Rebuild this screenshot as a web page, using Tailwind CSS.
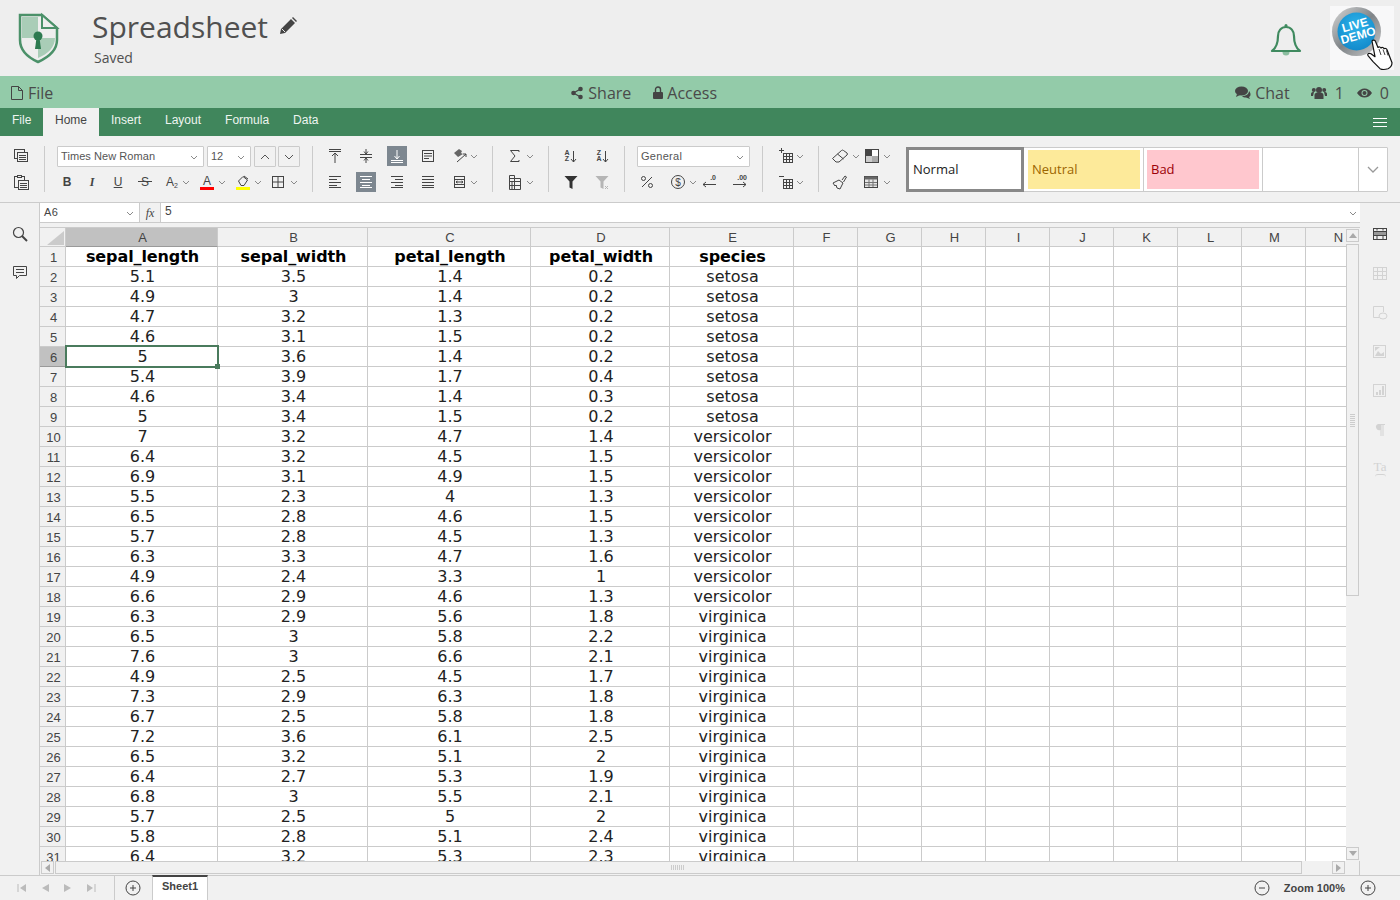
<!DOCTYPE html>
<html lang="en">
<head>
  <meta charset="UTF-8">
  <title>Spreadsheet</title>
  <script src="https://cdn.jsdelivr.net/npm/@tailwindcss/browser@4"></script>
</head>
<body class="h-screen overflow-hidden flex flex-col bg-[#f1f1f1] font-['Open_Sans',sans-serif] text-[#505050]">

  <!-- icon sprites -->
  <svg class="hidden" xmlns="http://www.w3.org/2000/svg">
    <symbol id="chev" viewBox="0 0 8 20"><path d="M1 9l3 3 3-3" fill="none" stroke="#8a8a8a"/></symbol>
    <symbol id="copy" viewBox="0 0 20 20"><g fill="#f1f1f1" stroke="#444"><rect x="2.5" y="3.5" width="10" height="9"/><rect x="5.5" y="6.5" width="10" height="9"/><path d="M7 9.5h7M7 11.5h7M7 13.5h7"/></g></symbol>
    <symbol id="paste" viewBox="0 0 20 20"><g fill="#f1f1f1" stroke="#444"><rect x="2.5" y="4.5" width="10" height="11"/><rect x="5.5" y="3.5" width="4" height="2"/><rect x="6.5" y="8.5" width="10" height="9"/><path d="M8 11.5h7M8 13.5h7M8 15.5h7"/></g></symbol>
    <symbol id="atop" viewBox="0 0 20 20"><path d="M4 3.500h12M4 5.500h12M10 17V7M7 10l3-3 3 3" fill="none" stroke="#444"/></symbol>
    <symbol id="amid" viewBox="0 0 20 20"><path d="M4 8.500h12M4 11.500h12M10 3v5M8 5.500l2 2.500 2-2.500M10 17v-5M8 14.500l2-2.500 2 2.500" fill="none" stroke="#444"/></symbol>
    <symbol id="abot" viewBox="0 0 20 20"><path d="M4 14.500h12M4 16.500h12M10 4v9M7.500 10l2.500 3 2.500-3" fill="none" stroke="#fff"/></symbol>
    <symbol id="wrap" viewBox="0 0 20 20"><rect x="4.500" y="4.500" width="11" height="11" fill="none" stroke="#444"/><path d="M6 7.500h8M6 10h8M6 12.500h5" stroke="#444"/></symbol>
    <symbol id="orient" viewBox="0 0 20 20"><path d="M4 7l5-4 3 2-1 2 2 1-5 3z" fill="#666"/><path d="M7 16l9-8M13 8h3v3" fill="none" stroke="#444"/></symbol>
    <symbol id="left" viewBox="0 0 20 20"><path d="M4 4.500h12M4 7.500h8M4 10.500h12M4 13.500h8M4 15.500h12" stroke="#444"/></symbol>
    <symbol id="center" viewBox="0 0 20 20"><path d="M4 4.500h12M6 7.500h8M4 10.500h12M6 13.500h8M4 15.500h12" stroke="#fff"/></symbol>
    <symbol id="right" viewBox="0 0 20 20"><path d="M4 4.500h12M8 7.500h8M4 10.500h12M8 13.500h8M4 15.500h12" stroke="#444"/></symbol>
    <symbol id="just" viewBox="0 0 20 20"><path d="M4 4.500h12M4 7.500h12M4 10.500h12M4 13.500h12M4 15.500h12" stroke="#444"/></symbol>
    <symbol id="merge" viewBox="0 0 20 20"><rect x="4.500" y="4.500" width="10" height="11" fill="none" stroke="#444"/><path d="M4.500 7.500h10M4.500 12.500h10M6 10h7M6 10l1.500-1M6 10l1.500 1M13 10l-1.500-1M13 10l-1.500 1" fill="none" stroke="#444"/></symbol>
    <symbol id="sum" viewBox="0 0 20 20"><path d="M14 6V4.500H5.500L10 10l-4.500 5.500H14V14" fill="none" stroke="#444"/></symbol>
    <symbol id="table" viewBox="0 0 20 20"><path d="M4.500 3.500h5v3h6v11h-11zM4.500 6.500h5M4.500 9.500h11M4.500 13.500h11M9.500 6.500v11M7 9.500v8" fill="none" stroke="#444"/></symbol>
    <symbol id="down" viewBox="0 0 20 20"><path d="M11 13l2.500 3 2.500-3M13.500 5v11" fill="none" stroke="#444"/></symbol>
    <symbol id="filter" viewBox="0 0 20 20"><path d="M3.500 4h13l-5 5.500V17l-3-1.500V9.500z" fill="#333"/></symbol>
    <symbol id="nofilter" viewBox="0 0 20 20"><path d="M3.500 4h13l-5 5.500V17l-3-1.500V9.500z" fill="#b5b5b5"/><path d="M13 14l3 3M16 14l-3 3" stroke="#b5b5b5"/></symbol>
    <symbol id="pct" viewBox="0 0 20 20"><path d="M15 5L5 15" stroke="#444"/><circle cx="6.500" cy="6.500" r="2" fill="none" stroke="#444"/><circle cx="13.500" cy="13.500" r="2" fill="none" stroke="#444"/></symbol>
    <symbol id="ins" viewBox="0 0 20 20"><path d="M3 4.500h5M5.500 2v5" stroke="#444"/><g fill="none" stroke="#444"><rect x="7.500" y="7.500" width="9" height="9"/><path d="M10.500 7.500v9M13.500 7.500v9M7.500 10.500h9M7.500 13.500h9"/></g></symbol>
    <symbol id="del" viewBox="0 0 20 20"><path d="M3 4.500h5" stroke="#444"/><g fill="none" stroke="#444"><rect x="7.500" y="7.500" width="9" height="9"/><path d="M10.500 7.500v9M13.500 7.500v9M7.500 10.500h9M7.500 13.500h9"/></g></symbol>
    <symbol id="eraser" viewBox="0 0 20 20"><path d="M2.500 12.500l9-8a1.500 1.500 0 0 1 2 0l3.500 2.500a1.500 1.500 0 0 1 0 2l-8 7H6z" fill="none" stroke="#444"/><path d="M7.500 8l6 5" stroke="#444"/></symbol>
    <symbol id="shade" viewBox="0 0 20 20"><rect x="3.500" y="3.500" width="13" height="13" fill="#fff" stroke="#444"/><rect x="4" y="4" width="6" height="6" fill="#444"/><rect x="10" y="10" width="6" height="6" fill="#aaa"/><rect x="4" y="10" width="6" height="6" fill="#ccc"/></symbol>
    <symbol id="brush" viewBox="0 0 20 20"><path d="M3 11l6-3 4 3-3 6-3-1-1-3-1 1zM12 8l3-4 1.500 1-3 5" fill="none" stroke="#444"/></symbol>
    <symbol id="tstyle" viewBox="0 0 20 20"><rect x="3.500" y="4.500" width="13" height="11" fill="#e6e6e6" stroke="#444"/><rect x="3.500" y="4.500" width="13" height="3" fill="#666"/><path d="M3.500 10.500h13M3.500 13h13M8 7.500v8M12 7.500v8" stroke="#444" opacity=".7"/></symbol>
    <symbol id="g-table" viewBox="0 0 20 20"><rect x="3.500" y="3.500" width="13" height="12" fill="none" stroke="#d3d3d3"/><path d="M3.500 7.500h13M3.500 11.500h13M7.500 3.500v12M12.500 3.500v12" stroke="#d3d3d3"/></symbol>
    <symbol id="g-shape" viewBox="0 0 20 20"><path d="M9 14.500H3.500v-11h10V9" fill="none" stroke="#d3d3d3"/><ellipse cx="13" cy="13" rx="4" ry="3" fill="none" stroke="#d3d3d3"/></symbol>
    <symbol id="g-img" viewBox="0 0 20 20"><rect x="3.500" y="3.500" width="12" height="12" fill="none" stroke="#d3d3d3"/><path d="M5 14l3-5 3 3 3-2v4z" fill="#d3d3d3"/><path d="M5 5h5l-5 4z" fill="#d3d3d3"/></symbol>
    <symbol id="g-chart" viewBox="0 0 20 20"><rect x="3.500" y="3.500" width="12" height="12" fill="none" stroke="#d3d3d3"/><path d="M6 11h2v3H6zM9 9h2v5H9zM12 5h2v9h-2z" fill="#d3d3d3"/></symbol>
    <symbol id="g-para" viewBox="0 0 20 20"><path d="M8 4h7v1h-1.500v11h-1V5h-1v11h-1v-6a3 3 0 0 1-2.500-6z" fill="#d3d3d3"/></symbol>
  </svg>

  <!-- title bar -->
  <header class="h-[76px] shrink-0 flex bg-[#eeeeee]">
    <svg class="w-[44px] h-[52px] ml-[17px] mt-[12px]" viewBox="0 0 44 52">
      <path d="M3 3h22l15 13v12c0 10-8 17-19 22C10 45 3 38 3 28z" fill="#eeeeee" stroke="#4b9169" stroke-width="2.500"/>
      <path d="M5 5h16v21H5zM21 26h17c0 9-7 16-17 20z" fill="#a9cdb7"/>
      <path d="M25 3v13h15z" fill="#eeeeee" stroke="#4b9169" stroke-width="2"/>
      <circle cx="21" cy="24" r="4.500" fill="#2d7a50"/>
      <path d="M19.500 26h3l1.500 11h-6z" fill="#2d7a50"/>
    </svg>
    <div class="ml-[31px] mt-[8px]">
      <div class="flex items-center h-[38px]">
        <span class="text-[30px] leading-[38px]">Spreadsheet</span>
        <svg class="w-[18px] h-[18px] ml-[11px] mb-[2px]" viewBox="0 0 18 18"><path d="M1 17l1-5L12 2l4 4L6 16zM13 1l1-1 4 4-1 1z" fill="#444"/><path d="M3 12l3 3" stroke="#eee"/></svg>
      </div>
      <p class="text-sm leading-[19px] ml-[2px] mt-[2px]">Saved</p>
    </div>
    <svg class="w-[32px] h-[36px] ml-auto mt-[23px] mr-[28px]" viewBox="0 0 32 36">
      <path d="M16 4c-5 0-8 4-8 9 0 8-2 12-6 15h28c-4-3-6-7-6-15 0-5-3-9-8-9z" fill="none" stroke="#3f8a5f" stroke-width="2.200" stroke-linejoin="round"/>
      <circle cx="16" cy="2.500" r="1.500" fill="#3f8a5f"/>
      <path d="M12.500 29a3.500 3.500 0 0 0 7 0z" fill="#8bbd9f"/>
    </svg>
    <!-- live demo badge -->
    <div class="relative w-[64px] h-[64px] mt-[6px] mr-[6px] bg-[#f8f8f9]">
      <svg class="absolute left-0 top-0 overflow-visible" width="64" height="64" viewBox="0 0 64 64">
        <defs>
          <linearGradient id="ring" x1="0" y1="0" x2="1" y2="1"><stop offset="0" stop-color="#d9d9d9"/><stop offset=".5" stop-color="#7f8488"/><stop offset="1" stop-color="#cfcfcf"/></linearGradient>
          <radialGradient id="ball" cx=".5" cy=".35" r=".7"><stop offset="0" stop-color="#2db3ea"/><stop offset="1" stop-color="#1187c9"/></radialGradient>
        </defs>
        <circle cx="26.500" cy="25.500" r="24.500" fill="url(#ring)"/>
        <circle cx="26.500" cy="25.500" r="19" fill="url(#ball)"/>
        <g fill="#fff" font-family="Liberation Sans" font-weight="700" text-anchor="middle" font-size="12">
          <text x="25" y="23" transform="rotate(-16 25 19)">LIVE</text>
          <text x="28" y="33.500" transform="rotate(-16 28 29)">DEMO</text>
        </g>
        <path d="M42 35c1-1.500 3-1 3.500.5l2.500 6c1-1 2.500-.5 3 .5 1-1 2.500-.5 3 .7 1-.7 2.500 0 3 1l5 13c0 3-2 5-4 6-3 1-6 1-8 0l-7-7-5-6c-1-2 1-3 3-2l4 3z" fill="#fff" stroke="#111" stroke-width="1.200" stroke-linejoin="round"/>
        <path d="M49 43l2 6M53 43.500l2 5.500M56.500 44.500l1.500 5" stroke="#111" stroke-width=".8"/>
      </svg>
    </div>
  </header>

  <!-- document menu -->
  <nav class="h-8 shrink-0 pt-[2px] flex items-center bg-[#93cba9] text-base text-[#4a4a4a]">
    <svg class="w-3 h-[14px] ml-[11px] mr-[5px]" viewBox="0 0 12 14"><path d="M.5.500h7l4 4v9H.5zM7.500.500v4h4" fill="none" stroke="#444"/></svg>
    <span>File</span>
    <svg class="w-3 h-[14px] ml-[518px] mr-[5px]" viewBox="0 0 12 14"><path d="M9.500 3L2.500 7l7 4" fill="none" stroke="#444" stroke-width="1.200"/><circle cx="9.500" cy="3" r="2.300" fill="#444"/><circle cx="2.500" cy="7" r="2.300" fill="#444"/><circle cx="9.500" cy="11" r="2.300" fill="#444"/></svg>
    <span>Share</span>
    <svg class="w-[10px] h-[14px] ml-[22px] mr-[4px]" viewBox="0 0 10 14"><path d="M2.500 6V3.500a2.500 2.500 0 0 1 5 0V6" fill="none" stroke="#444" stroke-width="1.400"/><rect x="0" y="6" width="10" height="7" rx="1" fill="#444"/></svg>
    <span>Access</span>
    <svg class="w-4 h-[14px] ml-auto mr-1" viewBox="0 0 16 14"><ellipse cx="6.500" cy="5" rx="6.500" ry="4.500" fill="#444"/><path d="M2 8L1 11l4-2z" fill="#444"/><path d="M14 5c2 2 2 5 0 6l1 2-4-1.500c-2 0-3-.5-4-1.500 4 0 7-2 7-5z" fill="#444"/></svg>
    <span>Chat</span>
    <svg class="w-4 h-[14px] ml-[21px] mr-[8px]" viewBox="0 0 16 14"><circle cx="8" cy="4" r="3" fill="#444"/><circle cx="2.800" cy="4" r="2" fill="#444"/><circle cx="13.200" cy="4" r="2" fill="#444"/><path d="M3.500 13V9c0-2 2-2.500 4.500-2.500s4.500.5 4.500 2.500v4zM0 10V8c0-1.500 1-2 3-2l-1 4zM16 10V8c0-1.500-1-2-3-2l1 4z" fill="#444"/></svg>
    <span>1</span>
    <svg class="w-[15px] h-[14px] ml-[13px] mr-[8px]" viewBox="0 0 15 14"><path d="M0 7c2-3 4.500-4.500 7.500-4.500S13 4 15 7c-2 3-4.500 4.500-7.500 4.500S2 10 0 7z" fill="#444"/><circle cx="7.500" cy="7" r="3" fill="#93cba9"/><circle cx="7.500" cy="7" r="2" fill="#444"/></svg>
    <span class="mr-[11px]">0</span>
  </nav>

  <!-- ribbon tabs -->
  <nav class="h-7 shrink-0 flex bg-[#40865c] text-xs leading-[24px] text-[#eef5f0] font-['Liberation_Sans',sans-serif]">
    <span class="ml-[12px] w-[19px]">File</span>
    <span class="ml-[12px] w-[56px] text-center bg-[#f1f1f1] text-[#444]">Home</span>
    <span class="ml-[12px]">Insert</span>
    <span class="ml-[24px]">Layout</span>
    <span class="ml-[24px]">Formula</span>
    <span class="ml-[24px]">Data</span>
    <span class="ml-auto mr-[13px] mt-[10px] w-[14px] h-[9px] border-y border-white relative after:absolute after:left-0 after:right-0 after:top-[3px] after:h-px after:bg-white"></span>
  </nav>

  <!-- toolbar -->
  <section class="h-[67px] shrink-0 pt-[10px] flex items-start border-b border-[#cbcbcb] font-['Liberation_Sans',sans-serif] text-[#444]">
    <div class="w-[44px] h-[46px] flex flex-col gap-[6px]">
      <svg class="w-5 h-5 ml-[12px]"><use href="#copy"/></svg>
      <svg class="w-5 h-5 ml-[12px]"><use href="#paste"/></svg>
    </div>

    <div class="w-[268px] h-[46px] border-l border-[#cbcbcb] flex flex-col gap-[6px]">
      <div class="h-5 flex">
        <div class="w-[147px] h-[21px] ml-[12px] bg-white border border-[#cbcbcb] rounded-[1px] flex items-center pl-[3px] text-[11px] tracking-[0.07px] text-[#555]">Times New Roman<svg class="w-2 h-5 ml-auto mr-[5px]"><use href="#chev"/></svg></div>
        <div class="w-[44px] h-[21px] ml-[3px] bg-white border border-[#cbcbcb] rounded-[1px] flex items-center pl-[3px] text-[11px] text-[#555]">12<svg class="w-2 h-5 ml-auto mr-[5px]"><use href="#chev"/></svg></div>
        <div class="w-[22px] h-[21px] ml-[3px] border border-[#cbcbcb] rounded-[1px] flex items-center justify-center"><svg width="10" height="6"><path d="M1 5l4-4 4 4" fill="none" stroke="#555"/></svg></div>
        <div class="w-[22px] h-[21px] ml-[2px] border border-[#cbcbcb] rounded-[1px] flex items-center justify-center"><svg width="10" height="6"><path d="M1 1l4 4 4-4" fill="none" stroke="#555"/></svg></div>
      </div>
      <div class="h-5 flex items-center text-[12px]">
        <span class="w-5 ml-[12px] text-center font-bold">B</span>
        <span class="w-5 ml-[5px] text-center italic font-bold font-['Liberation_Serif',serif]">I</span>
        <span class="w-5 ml-[6px] text-center underline">U</span>
        <span class="relative w-5 ml-[7px] text-center">S<span class="absolute left-[3px] right-[3px] top-[8px] h-px bg-[#444]"></span></span>
        <span class="w-5 ml-[7px] text-center">A<sub class="text-[7px]">2</sub></span>
        <svg class="w-2 h-5"><use href="#chev"/></svg>
        <span class="w-5 ml-[7px] flex flex-col items-center leading-[12px]">A<span class="w-[14px] h-[3px] bg-[#ff0000]"></span></span>
        <svg class="w-2 h-5 ml-px"><use href="#chev"/></svg>
        <span class="w-5 ml-[7px] flex flex-col items-center"><svg width="14" height="12" viewBox="0 0 14 12"><path d="M2.500 6L7 1.500l4.500 3.500L8 10.500H5zM8 1l4 3" fill="none" stroke="#444"/></svg><span class="w-[14px] h-[3px] bg-[#ffff00]"></span></span>
        <svg class="w-2 h-5 ml-px"><use href="#chev"/></svg>
        <svg class="w-5 h-5 ml-[7px]" viewBox="0 0 20 20"><rect x="3.500" y="4.500" width="11" height="11" fill="none" stroke="#444"/><path d="M9 4.500v11M3.500 10h11" stroke="#444"/></svg>
        <svg class="w-2 h-5 ml-px"><use href="#chev"/></svg>
      </div>
    </div>

    <div class="w-[180px] h-[46px] border-l border-[#cbcbcb] flex flex-col gap-[6px]">
      <div class="h-5 flex">
        <svg class="w-5 h-5 ml-[12px]"><use href="#atop"/></svg>
        <svg class="w-5 h-5 ml-[11px]"><use href="#amid"/></svg>
        <svg class="w-5 h-5 ml-[11px] bg-[#7d8790]"><use href="#abot"/></svg>
        <svg class="w-5 h-5 ml-[11px]"><use href="#wrap"/></svg>
        <svg class="w-5 h-5 ml-[12px]"><use href="#orient"/></svg>
        <svg class="w-2 h-5"><use href="#chev"/></svg>
      </div>
      <div class="h-5 flex">
        <svg class="w-5 h-5 ml-[12px]"><use href="#left"/></svg>
        <svg class="w-5 h-5 ml-[11px] bg-[#7d8790]"><use href="#center"/></svg>
        <svg class="w-5 h-5 ml-[11px]"><use href="#right"/></svg>
        <svg class="w-5 h-5 ml-[11px]"><use href="#just"/></svg>
        <svg class="w-5 h-5 ml-[12px]"><use href="#merge"/></svg>
        <svg class="w-2 h-5"><use href="#chev"/></svg>
      </div>
    </div>

    <div class="w-[56px] h-[46px] border-l border-[#cbcbcb] flex flex-col gap-[6px]">
      <div class="h-5 flex"><svg class="w-5 h-5 ml-[12px]"><use href="#sum"/></svg><svg class="w-2 h-5 ml-px"><use href="#chev"/></svg></div>
      <div class="h-5 flex"><svg class="w-5 h-5 ml-[12px]"><use href="#table"/></svg><svg class="w-2 h-5 ml-px"><use href="#chev"/></svg></div>
    </div>

    <div class="w-[76px] h-[46px] border-l border-[#cbcbcb] flex flex-col gap-[6px]">
      <div class="h-5 flex">
        <span class="relative w-5 h-5 ml-[11px]"><span class="absolute left-[4px] top-[4px] text-[7px] leading-[6px] font-bold w-[6px] text-center">A<br>Z</span><svg class="w-5 h-5"><use href="#down"/></svg></span>
        <span class="relative w-5 h-5 ml-[12px]"><span class="absolute left-[4px] top-[4px] text-[7px] leading-[6px] font-bold w-[6px] text-center">Z<br>A</span><svg class="w-5 h-5"><use href="#down"/></svg></span>
      </div>
      <div class="h-5 flex">
        <svg class="w-5 h-5 ml-[12px]"><use href="#filter"/></svg>
        <svg class="w-5 h-5 ml-[11px]"><use href="#nofilter"/></svg>
      </div>
    </div>

    <div class="w-[138px] h-[46px] border-l border-[#cbcbcb] flex flex-col gap-[6px]">
      <div class="h-5 flex">
        <div class="w-[113px] h-[21px] ml-[12px] bg-white border border-[#cbcbcb] rounded-[1px] flex items-center pl-[3px] text-[11px] tracking-[0.3px] text-[#555]">General<svg class="w-2 h-5 ml-auto mr-[5px]"><use href="#chev"/></svg></div>
      </div>
      <div class="h-5 flex">
        <svg class="w-5 h-5 ml-[12px]"><use href="#pct"/></svg>
        <svg class="w-5 h-5 ml-[11px]" viewBox="0 0 20 20"><circle cx="10" cy="10" r="6.500" fill="none" stroke="#444"/><text x="10" y="13.500" font-size="10" text-anchor="middle" fill="#444">$</text></svg>
        <svg class="w-2 h-5 ml-px"><use href="#chev"/></svg>
        <span class="relative w-5 h-5 ml-[2px] text-[7px] font-bold"><span class="absolute right-[3px] top-[2px] leading-[8px]">.0</span><svg class="w-5 h-5" viewBox="0 0 20 20"><path d="M17 12.500H4M7 10l-3 2.500L7 15" fill="none" stroke="#444"/></svg></span>
        <span class="relative w-5 h-5 ml-[11px] text-[7px] font-bold"><span class="absolute right-[3px] top-[2px] leading-[8px]">.00</span><svg class="w-5 h-5" viewBox="0 0 20 20"><path d="M3 12.500h13M13 10l3 2.500-3 2.500" fill="none" stroke="#444"/></svg></span>
      </div>
    </div>

    <div class="w-[56px] h-[46px] border-l border-[#cbcbcb] flex flex-col gap-[6px]">
      <div class="h-5 flex"><svg class="w-5 h-5 ml-[13px]"><use href="#ins"/></svg><svg class="w-2 h-5"><use href="#chev"/></svg></div>
      <div class="h-5 flex"><svg class="w-5 h-5 ml-[13px]"><use href="#del"/></svg><svg class="w-2 h-5"><use href="#chev"/></svg></div>
    </div>

    <div class="w-[88px] h-[46px] border-l border-[#cbcbcb] flex flex-col gap-[6px]">
      <div class="h-5 flex"><svg class="w-5 h-5 ml-[11px]"><use href="#eraser"/></svg><svg class="w-2 h-5 ml-[2px]"><use href="#chev"/></svg><svg class="w-5 h-5 ml-[2px]"><use href="#shade"/></svg><svg class="w-2 h-5 ml-px"><use href="#chev"/></svg></div>
      <div class="h-5 flex"><svg class="w-5 h-5 ml-[11px]"><use href="#brush"/></svg><svg class="w-5 h-5 ml-[11px]"><use href="#tstyle"/></svg><svg class="w-2 h-5 ml-[2px]"><use href="#chev"/></svg></div>
    </div>

    <div class="w-[482px] h-[45px] mt-px bg-white border border-[#cbcbcb] rounded-[1px] flex text-[13px] font-['Open_Sans',sans-serif]">
      <div class="w-[118px] -ml-px -my-px border-[3px] border-[#888888] flex items-center pl-[4px] text-[#222]">Normal</div>
      <div class="w-[120px] border-r border-[#cbcbcb] pl-[4px] py-[2px]"><div class="w-[112px] h-full bg-[#fdea9a] text-[#9c6500] flex items-center pl-[4px]">Neutral</div></div>
      <div class="w-[119px] border-r border-[#cbcbcb] pl-[3px] py-[2px]"><div class="w-[112px] h-full bg-[#ffc7ce] text-[#9c0006] flex items-center pl-[4px]">Bad</div></div>
      <div class="w-[96px] border-r border-[#cbcbcb]"></div>
      <div class="flex-1 flex items-center justify-center"><svg width="12" height="8"><path d="M1 1l5 5 5-5" fill="none" stroke="#999" stroke-width="1.300"/></svg></div>
    </div>
  </section>

  <!-- workspace -->
  <main class="flex-1 min-h-0 flex font-['Liberation_Sans',sans-serif]">
    <aside class="w-10 shrink-0 border-r border-[#cbcbcb] flex flex-col items-center pt-[22px] gap-[20px]">
      <svg class="w-[18px] h-[18px]" viewBox="0 0 18 18"><circle cx="7.500" cy="7.500" r="5" fill="none" stroke="#444" stroke-width="1.200"/><path d="M11 11l5 5" stroke="#444" stroke-width="2"/></svg>
      <svg class="w-[18px] h-[18px]" viewBox="0 0 18 18"><path d="M2.500 3.500h13v9h-7l-3 3v-3h-3z" fill="none" stroke="#444"/><path d="M5 6.500h8M5 9.500h8" stroke="#444"/></svg>
    </aside>

    <div class="flex-1 min-w-0 flex flex-col">
      <!-- formula bar -->
      <div class="h-5 shrink-0 flex bg-white border-b border-[#cbcbcb] text-[11px] text-[#444]">
        <div class="w-[100px] border-r border-[#cbcbcb] flex items-center pl-[4px] tracking-[0.3px]">A6<svg class="w-2 h-5 ml-auto mr-[5px]"><use href="#chev"/></svg></div>
        <div class="w-[21px] bg-[#f1f1f1] border-r border-[#cbcbcb] flex items-center justify-center text-xs italic font-['Liberation_Serif',serif]">fx</div>
        <div class="pl-[4px] text-xs leading-[17px]">5</div>
        <svg class="w-2 h-5 ml-auto mr-[3px]"><use href="#chev"/></svg>
      </div>

      <!-- sheet area -->
      <div class="flex-1 min-h-0 mt-1 border-t border-[#cbcbcb] border-r flex flex-col">
        <div class="flex-1 min-h-0 flex">
          <div id="sheet" class="w-[1306px] shrink-0 overflow-hidden bg-white"></div>
          <div class="flex-1 flex flex-col items-center bg-[#f1f1f1] pt-[1px] pr-px">
            <div class="w-[13px] h-[13px] border border-[#cbcbcb] flex items-center justify-center"><span class="border-x-[4px] border-x-transparent border-b-[5px] border-b-[#aaa]"></span></div>
            <div class="mt-[2px] w-[13px] h-[352px] border border-[#cbcbcb] flex items-center justify-center"><span class="w-[5px] h-[13px] bg-[repeating-linear-gradient(#ccc_0,#ccc_1px,transparent_1px,transparent_2px)]"></span></div>
            <div class="mt-auto mb-px w-[13px] h-[13px] border border-[#cbcbcb] flex items-center justify-center"><span class="border-x-[4px] border-x-transparent border-t-[5px] border-t-[#aaa]"></span></div>
          </div>
        </div>
        <!-- horizontal scrollbar -->
        <div class="h-[14px] shrink-0 flex items-start pl-px border-b-0">
          <div class="w-[13px] h-[13px] border border-[#cbcbcb] flex items-center justify-center"><span class="border-y-[4px] border-y-transparent border-r-[5px] border-r-[#aaa]"></span></div>
          <div class="ml-px w-[1247px] h-[13px] border border-[#cbcbcb] flex items-center justify-center"><span class="ml-[-3px] w-[13px] h-[5px] bg-[repeating-linear-gradient(90deg,#ccc_0,#ccc_1px,transparent_1px,transparent_2px)]"></span></div>
          <div class="ml-[30px] w-[13px] h-[13px] border border-[#cbcbcb] flex items-center justify-center"><span class="border-y-[4px] border-y-transparent border-l-[5px] border-l-[#aaa]"></span></div>
        </div>
      </div>
    </div>

    <aside class="w-10 shrink-0 flex flex-col items-center pt-[22px] gap-[19px]">
      <svg class="w-5 h-5" viewBox="0 0 20 20"><rect x="3.500" y="3.500" width="13" height="11" fill="none" stroke="#444"/><rect x="4" y="6" width="12" height="5" fill="#999"/><path d="M3.500 6.500h13M3.500 10.500h13M7 3.500v2M13 3.500v2M7 11v3M13 11v3" stroke="#444"/></svg>
      <svg class="w-5 h-5"><use href="#g-table"/></svg>
      <svg class="w-5 h-5"><use href="#g-shape"/></svg>
      <svg class="w-5 h-5"><use href="#g-img"/></svg>
      <svg class="w-5 h-5"><use href="#g-chart"/></svg>
      <svg class="w-5 h-5"><use href="#g-para"/></svg>
      <span class="w-5 h-5 mt-px flex flex-col items-center text-[13px] leading-[14px] text-[#d3d3d3] font-['Liberation_Serif',serif]">Ta<span class="w-[11px] h-[3px] border-t border-[#d3d3d3] rounded-t-full"></span></span>
    </aside>
  </main>

  <!-- status bar -->
  <footer class="h-[25px] shrink-0 flex items-stretch border-t border-[#cbcbcb] font-['Liberation_Sans',sans-serif] text-[#444]">
    <div class="w-[115px] border-r border-[#cbcbcb] flex items-center">
      <svg class="w-[10px] h-[10px] ml-[17px]" viewBox="0 0 10 10"><path d="M1 1v8" stroke="#bbb"/><path d="M9 1v8L3 5z" fill="#bbb"/></svg>
      <svg class="w-[10px] h-[10px] ml-[13px]" viewBox="0 0 10 10"><path d="M9 1v8L2 5z" fill="#bbb"/></svg>
      <svg class="w-[10px] h-[10px] ml-[13px]" viewBox="0 0 10 10"><path d="M1 1v8l7-4z" fill="#bbb"/></svg>
      <svg class="w-[10px] h-[10px] ml-[13px]" viewBox="0 0 10 10"><path d="M9 1v8" stroke="#bbb"/><path d="M1 1v8l6-4z" fill="#bbb"/></svg>
    </div>
    <div class="w-[37px] pr-[2px] flex items-center justify-center"><svg width="16" height="16" viewBox="0 0 16 16"><circle cx="8" cy="8" r="7" fill="none" stroke="#444"/><path d="M5 8h6M8 5v6" stroke="#444"/></svg></div>
    <div class="w-[56px] -mt-px bg-white border-t-2 border-t-[#444] border-x border-x-[#cbcbcb] text-[11px] font-bold text-center leading-[18px]">Sheet1</div>
    <div class="ml-auto flex items-center mr-[24px]">
      <svg width="16" height="16" viewBox="0 0 16 16"><circle cx="8" cy="8" r="7" fill="none" stroke="#444"/><path d="M5 8h6" stroke="#444"/></svg>
      <span class="ml-[14px] text-[11px] font-bold">Zoom 100%</span>
      <svg class="ml-[15px]" width="16" height="16" viewBox="0 0 16 16"><circle cx="8" cy="8" r="7" fill="none" stroke="#444"/><path d="M5 8h6M8 5v6" stroke="#444"/></svg>
    </div>
  </footer>

  <script>
    const columns = ['A','B','C','D','E','F','G','H','I','J','K','L','M','N'];
    const gridCols = 'grid grid-cols-[26px_152px_150px_163px_139px_124px_repeat(9,64px)]';
    const rows = [
      ['sepal_length','sepal_width','petal_length','petal_width','species'],
      ['5.1','3.5','1.4','0.2','setosa'],['4.9','3','1.4','0.2','setosa'],['4.7','3.2','1.3','0.2','setosa'],
      ['4.6','3.1','1.5','0.2','setosa'],['5','3.6','1.4','0.2','setosa'],['5.4','3.9','1.7','0.4','setosa'],
      ['4.6','3.4','1.4','0.3','setosa'],['5','3.4','1.5','0.2','setosa'],['7','3.2','4.7','1.4','versicolor'],
      ['6.4','3.2','4.5','1.5','versicolor'],['6.9','3.1','4.9','1.5','versicolor'],['5.5','2.3','4','1.3','versicolor'],
      ['6.5','2.8','4.6','1.5','versicolor'],['5.7','2.8','4.5','1.3','versicolor'],['6.3','3.3','4.7','1.6','versicolor'],
      ['4.9','2.4','3.3','1','versicolor'],['6.6','2.9','4.6','1.3','versicolor'],['6.3','2.9','5.6','1.8','virginica'],
      ['6.5','3','5.8','2.2','virginica'],['7.6','3','6.6','2.1','virginica'],['4.9','2.5','4.5','1.7','virginica'],
      ['7.3','2.9','6.3','1.8','virginica'],['6.7','2.5','5.8','1.8','virginica'],['7.2','3.6','6.1','2.5','virginica'],
      ['6.5','3.2','5.1','2','virginica'],['6.4','2.7','5.3','1.9','virginica'],['6.8','3','5.5','2.1','virginica'],
      ['5.7','2.5','5','2','virginica'],['5.8','2.8','5.1','2.4','virginica'],['6.4','3.2','5.3','2.3','virginica']
    ];

    let html = `<div class="${gridCols} grid-rows-[19px] w-[1400px] h-[19px] bg-[#f1f1f1] text-[13px] text-[#444] text-center leading-[19px]">
      <div class="border-r border-b border-[#cbcbcb] flex items-end justify-end pr-px pb-px"><span class="border-l-[17px] border-l-transparent border-b-[14px] border-b-[#cbcbcb]"></span></div>`;
    columns.forEach((c, i) => {
      html += i === 0
        ? `<div class="pl-[2px] bg-[#c1c1c1] border-r border-b border-r-[#cbcbcb] border-b-[#9a9a9a]">${c}</div>`
        : `<div class="pl-[2px] border-r border-b border-[#cbcbcb]">${c}</div>`;
    });
    html += `</div>`;

    rows.forEach((row, r) => {
      const selected = r === 5;
      html += `<div class="${gridCols} grid-rows-[20px] w-[1400px] h-5 text-base leading-[19px] text-center text-[#222] font-['DejaVu_Sans',sans-serif]">`;
      html += selected
        ? `<div class="pl-[2px] bg-[#c1c1c1] border-r border-b border-r-[#9a9a9a] border-b-[#9a9a9a] text-[13px] text-[#444] leading-[21px] font-['Liberation_Sans',sans-serif]">${r + 1}</div>`
        : `<div class="pl-[2px] bg-[#f1f1f1] border-r border-b border-[#cbcbcb] text-[13px] text-[#444] leading-[21px] font-['Liberation_Sans',sans-serif]">${r + 1}</div>`;
      columns.forEach((c, i) => {
        const text = row[i] || '';
        if (selected && i === 0) {
          html += `<div class="relative pl-[2px] border-r border-b border-[#cbcbcb]">${text}<span class="absolute -left-px -top-[2px] -right-[2px] -bottom-[2px] border-2 border-[#4a7b5d]"></span><span class="absolute -right-[3px] -bottom-[3px] w-[5px] h-[5px] bg-[#4a7b5d]"></span></div>`;
        } else if (r === 0) {
          html += `<div class="pl-[2px] border-r border-b border-[#cbcbcb] font-bold text-black tracking-[-0.1px]">${text}</div>`;
        } else {
          html += `<div class="pl-[2px] border-r border-b border-[#cbcbcb]">${text}</div>`;
        }
      });
      html += `</div>`;
    });
    document.getElementById('sheet').innerHTML = html;
  </script>
</body>
</html>
